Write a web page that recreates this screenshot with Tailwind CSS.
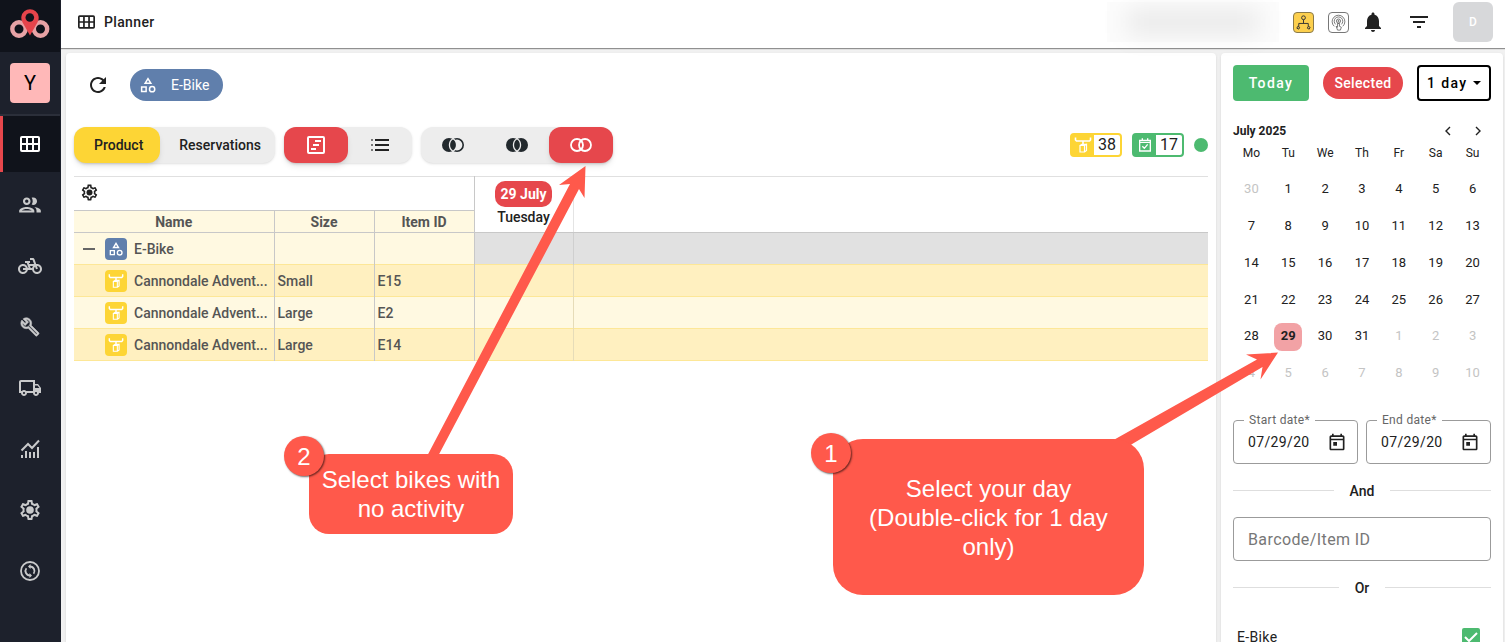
<!DOCTYPE html>
<html lang="en" class="h-full">
	<head>
		<meta charset="UTF-8">
		<meta name="viewport" content="width=device-width, initial-scale=1.0">
		<title>Planner</title>
		<script src="https://cdn.jsdelivr.net/npm/@tailwindcss/browser@4"></script>
	</head>
	<body class="relative h-full flex overflow-hidden bg-[#f1f1f1] font-['Roboto',sans-serif] text-sm text-[#212121]">
		<!-- shared icons -->
		<svg class="hidden" xmlns="http://www.w3.org/2000/svg">
			<symbol id="icon-grid" viewBox="0 0 20 16">
				<path d="M2 1h16a1 1 0 0 1 1 1v12a1 1 0 0 1-1 1H2a1 1 0 0 1-1-1V2a1 1 0 0 1 1-1zM7 1v14M13 1v14M1 8h18" fill="none" stroke="currentColor" stroke-width="2"/>
			</symbol>
			<symbol id="icon-category" viewBox="0 0 24 24">
				<path d="M12 3.5 8.2 9.8h7.6zM3.5 14.5h6v6h-6z" fill="none" stroke="currentColor" stroke-width="2"/>
				<circle cx="17.5" cy="17.5" r="3.5" fill="none" stroke="currentColor" stroke-width="2"/>
			</symbol>
			<symbol id="icon-handlebar" viewBox="0 0 18 18">
				<path d="M1.5 1.5V4l1 1h13l1-1V1.5M9 5v4" fill="none" stroke="currentColor" stroke-width="1.6"/>
				<path d="M6 9.500h4.500v6.500H6zM10.500 9.500l2-1.200v6.200l-2 1.500M6 9.500l2-1.200h4.500" fill="none" stroke="currentColor" stroke-width="1.200"/>
			</symbol>
			<symbol id="icon-settings" viewBox="0 0 24 24">
				<path fill="currentColor" d="M19.430 12.980c.04-.32.07-.64.07-.98 0-.34-.03-.66-.07-.98l2.110-1.650c.19-.15.24-.42.12-.64l-2-3.460c-.09-.16-.26-.25-.44-.25-.06 0-.12.01-.17.03l-2.490 1c-.52-.4-1.080-.73-1.690-.98l-.38-2.650C14.460 2.180 14.250 2 14 2h-4c-.25 0-.46.18-.49.42l-.38 2.650c-.61.25-1.170.59-1.690.98l-2.490-1c-.06-.02-.12-.03-.18-.03-.17 0-.34.09-.43.25l-2 3.460c-.13.22-.07.49.12.64l2.110 1.650c-.04.32-.07.65-.07.98 0 .33.03.66.07.98l-2.110 1.650c-.19.15-.24.42-.12.64l2 3.460c.09.16.26.25.44.25.06 0 .12-.01.17-.03l2.490-1c.52.4 1.080.73 1.690.98l.38 2.650c.03.24.24.42.49.42h4c.25 0 .46-.18.49-.42l.38-2.650c.61-.25 1.170-.59 1.690-.98l2.490 1c.06.02.12.03.18.03.17 0 .34-.09.43-.25l2-3.460c.12-.22.07-.49-.12-.64l-2.110-1.650zm-1.980-1.710c.04.31.05.52.05.73 0 .21-.02.43-.05.73l-.14 1.130.89.7 1.080.84-.7 1.210-1.270-.51-1.040-.42-.9.68c-.43.32-.84.56-1.250.73l-1.060.43-.16 1.130-.2 1.350h-1.400l-.19-1.350-.16-1.130-1.060-.43c-.43-.18-.83-.41-1.230-.71l-.91-.7-1.060.43-1.270.51-.7-1.210 1.080-.84.89-.7-.14-1.130c-.03-.31-.05-.54-.05-.74s.02-.43.05-.73l.14-1.130-.89-.7-1.080-.84.7-1.210 1.270.51 1.040.42.9-.68c.43-.32.84-.56 1.250-.73l1.060-.43.16-1.130.2-1.350h1.390l.19 1.350.16 1.130 1.060.43c.43.18.83.41 1.230.71l.91.7 1.060-.43 1.270-.51.7 1.210-1.070.85-.89.7.14 1.130z"/>
				<circle cx="12" cy="12" r="3.800" fill="currentColor"/>
			</symbol>
			<symbol id="icon-calendar" viewBox="0 0 24 24">
				<path fill="currentColor" d="M19 4h-1V2h-2v2H8V2H6v2H5c-1.100 0-2 .9-2 2v14c0 1.100.9 2 2 2h14c1.100 0 2-.9 2-2V6c0-1.100-.9-2-2-2zm0 16H5V10h14v10zm0-12H5V6h14v2zM7.500 12h4.500v4.500H7.500z"/>
			</symbol>
		</svg>

		<aside class="w-[61px] shrink-0 border-r border-[#1d212c] bg-[#1d212c] text-[#c9cacb]">
			<div class="h-13 flex justify-center items-center bg-[#10131b]">
				<svg class="w-10 h-8 -mt-1" viewBox="0 0 40 32" fill="none">
					<circle cx="9" cy="21" r="6.700" stroke="#e8a3a6" stroke-width="4.400"/>
					<circle cx="30.500" cy="21" r="6.700" stroke="#e8a3a6" stroke-width="4.400"/>
					<path d="M20 27.500 12.600 14.500a8.700 8.700 0 1 1 14.800 0z" fill="#e6444b"/>
					<circle cx="19.800" cy="9.500" r="4.300" fill="#10131b"/>
				</svg>
			</div>
			<div class="h-16 flex justify-center items-center border-b-2 border-[#2b2f3a]">
				<button class="size-10 rounded-sm bg-[#ffb8b8] text-xl text-black">Y</button>
			</div>
			<nav>
				<a href="#" aria-label="Planner" class="h-14 mb-0.5 pr-[3px] flex justify-center items-center border-l-3 border-[#e6474c] bg-[#10131b] text-white"><svg class="w-5 h-4"><use href="#icon-grid"/></svg></a>
				<a href="#" aria-label="Customers" class="h-[61px] flex justify-center items-center"><svg class="size-6.5" viewBox="0 0 24 24" fill="currentColor"><path d="M9 13.750c-2.340 0-7 1.170-7 3.500V19h14v-1.750c0-2.330-4.660-3.500-7-3.500zM4.340 17c.84-.58 2.870-1.250 4.660-1.250s3.820.67 4.660 1.250H4.340zM9 12c1.930 0 3.500-1.570 3.500-3.500S10.930 5 9 5 5.500 6.570 5.500 8.500 7.070 12 9 12zm0-5c.83 0 1.500.67 1.500 1.500S9.830 10 9 10s-1.500-.67-1.500-1.500S8.170 7 9 7zm7.040 6.810c1.160.84 1.960 1.960 1.960 3.440V19h4v-1.750c0-2.020-3.500-3.170-5.960-3.440zM15 12c1.930 0 3.500-1.570 3.500-3.500S16.930 5 15 5c-.54 0-1.040.13-1.500.35.63.89 1 1.980 1 3.150s-.37 2.260-1 3.150c.46.22.96.35 1.500.35z"/></svg></a>
				<a href="#" aria-label="Bikes" class="h-[61px] flex justify-center items-center"><svg class="size-6" viewBox="0 0 24 24" fill="currentColor"><path d="M18.180 10l-1.700-4.680C16.190 4.530 15.440 4 14.600 4H12v2h2.600l1.460 4h-4.810l-.36-1H12V7H7v2h1.750l1.820 5H9.900c-.44-2.230-2.310-3.880-4.650-3.990C2.450 9.870 0 12.200 0 15s2.200 5 5 5c2.460 0 4.450-1.690 4.900-4h4.200c.44 2.230 2.310 3.880 4.650 3.990 2.800.13 5.250-2.190 5.250-5 0-2.800-2.200-5-5-5h-.82zM7.820 16c-.4 1.170-1.490 2-2.820 2-1.680 0-3-1.320-3-3s1.320-3 3-3c1.330 0 2.420.83 2.820 2H5v2h2.820zm6.280-2h-1.400l-.73-2H15c-.44.58-.76 1.250-.9 2zm4.900 4c-1.680 0-3-1.320-3-3 0-.93.41-1.730 1.050-2.280l.96 2.640 1.880-.68-.97-2.670c.03 0 .06-.01.08-.01 1.680 0 3 1.320 3 3s-1.320 3-3 3z"/></svg></a>
				<a href="#" aria-label="Maintenance" class="h-[61px] flex justify-center items-center"><svg class="size-5" viewBox="0 0 24 24" fill="currentColor" stroke="currentColor" stroke-width=".7"><path d="M22.610 18.990l-9.080-9.080c.93-2.340.45-5.100-1.440-7C9.790.61 6.210.4 3.660 2.260L7.500 6.110 6.080 7.520 2.250 3.690C.39 6.230.6 9.820 2.900 12.110c1.860 1.860 4.570 2.350 6.890 1.480l9.110 9.110c.39.39 1.020.39 1.410 0l2.300-2.300c.4-.38.4-1.010 0-1.410zm-3 1.600l-9.460-9.460c-.61.45-1.290.72-2 .82-1.360.2-2.790-.21-3.830-1.250C3.370 9.760 2.930 8.500 3 7.260l3.090 3.090 4.240-4.240-3.090-3.090c1.240-.07 2.490.37 3.440 1.310 1.080 1.080 1.490 2.570 1.240 3.960-.12.71-.42 1.370-.88 1.960l9.450 9.450-.88.89z"/></svg></a>
				<a href="#" aria-label="Deliveries" class="h-[61px] flex justify-center items-center"><svg class="size-6" viewBox="0 0 24 24" fill="currentColor"><path d="M20 8h-3V4H3c-1.100 0-2 .9-2 2v11h2c0 1.660 1.340 3 3 3s3-1.340 3-3h6c0 1.660 1.340 3 3 3s3-1.340 3-3h2v-5l-3-4zm-.5 1.500l1.960 2.500H17V9.500h2.500zM6 18c-.55 0-1-.45-1-1s.45-1 1-1 1 .45 1 1-.45 1-1 1zm2.220-3c-.55-.61-1.330-1-2.220-1s-1.670.39-2.220 1H3V6h12v9H8.220zM18 18c-.55 0-1-.45-1-1s.45-1 1-1 1 .45 1 1-.45 1-1 1z"/></svg></a>
				<a href="#" aria-label="Reports" class="h-[61px] flex justify-center items-center"><svg class="size-5" viewBox="0 0 20 20" fill="none" stroke="currentColor" stroke-width="2"><path d="M1.500 11.500 8 5l4 4 7-7.500M2 19v-3M6 19v-7M10 19v-6M14 19v-6M18 19V8"/></svg></a>
				<a href="#" aria-label="Settings" class="h-[61px] flex justify-center items-center"><svg class="size-6"><use href="#icon-settings"/></svg></a>
				<a href="#" aria-label="Sync" class="h-[61px] flex justify-center items-center"><svg class="size-6" viewBox="0 0 24 24" fill="none" stroke="currentColor" stroke-width="1.800"><circle cx="12" cy="12" r="9"/><path d="M12 7.500a4.500 4.500 0 0 1 3.600 7.200M12 16.500a4.500 4.500 0 0 1-3.600-7.200"/><path d="M12.500 5v5L10 7.500zM11.500 14v5l2.500-2.500z" fill="currentColor" stroke="none"/></svg></a>
			</nav>
		</aside>

		<div class="flex-1 min-w-0 flex flex-col">
			<header class="h-12 shrink-0 z-1 flex items-center bg-white pl-[17px] pr-3 pb-1 shadow-[0_1px_1px_rgba(0,0,0,0.4)]">
				<svg class="w-[17px] h-3.5 mr-[9px]"><use href="#icon-grid"/></svg>
				<h1 class="font-medium tracking-wide">Planner</h1>
				<div class="ml-auto mr-3.5 w-43 h-10 p-2 bg-[#fcfcfc]">
					<div class="h-6 mx-3 bg-black/8 blur-md"></div>
				</div>
				<button aria-label="Locations" class="mr-3.5 size-[21px] rounded-sm border border-[#8a7a4a] bg-[#fccf4d]">
					<svg class="w-full h-full" viewBox="0 0 20 20" fill="none" stroke="#333"><circle cx="10" cy="5" r="2"/><path d="M10 7v4M5 14v-3h10v3M4 14l-1 2 2 1 1-2zM15 14l-1 2 2 1 1-2z"/></svg>
				</button>
				<button aria-label="Tracking" class="mr-3 size-[21px] rounded-sm border border-[#777] bg-white">
					<svg class="w-full h-full" viewBox="0 0 20 20" fill="none" stroke="#555" stroke-width=".8"><path d="M5.500 14a6.700 6.700 0 1 1 9 0M7 12a4.500 4.500 0 1 1 6 0"/><circle cx="10" cy="8.500" r="2.200"/><circle cx="10" cy="8.500" r=".7"/><path d="M9 11v4l-1.500-1 1.500 4h3l1-3-2-1v-3z"/></svg>
				</button>
				<button aria-label="Notifications" class="mr-5.5">
					<svg class="size-6" viewBox="0 0 24 24" fill="currentColor"><path d="M12 22c1.100 0 2-.9 2-2h-4c0 1.100.9 2 2 2zm6-6v-5c0-3.070-1.630-5.640-4.500-6.320V4c0-.83-.67-1.500-1.500-1.500s-1.500.67-1.500 1.500v.68C7.640 5.360 6 7.920 6 11v5l-2 2v1h16v-1z"/></svg>
				</button>
				<button aria-label="Filter" class="mr-5.5">
					<svg class="size-6" viewBox="0 0 24 24" fill="currentColor"><path d="M10 18h4v-2h-4v2zM3 6v2h18V6H3zm3 7h12v-2H6v2z"/></svg>
				</button>
				<button class="size-10 rounded-md bg-[#d7d8da] font-medium text-xs text-white">D</button>
			</header>

			<div class="flex-1 min-h-0 flex gap-[5px] pt-1 pl-[5px] pr-0.5 mt-px">
				<main class="flex-1 min-w-0 px-2 rounded-t-sm bg-white shadow-sm">
					<div class="flex items-center gap-5 pt-4 pl-3">
						<button aria-label="Refresh">
							<svg class="size-6" viewBox="0 0 24 24" fill="currentColor"><path d="M17.650 6.350C16.200 4.900 14.210 4 12 4c-4.420 0-7.990 3.580-7.990 8s3.570 8 7.990 8c3.730 0 6.840-2.550 7.730-6h-2.080c-.82 2.330-3.040 4-5.650 4-3.310 0-6-2.690-6-6s2.690-6 6-6c1.660 0 3.140.69 4.220 1.780L13 11h7V4l-2.350 2.350z"/></svg>
						</button>
						<button class="h-8 flex items-center gap-3.5 pl-[9px] pr-3.5 rounded-full bg-[#607fac] text-white">
							<svg class="size-[18px]"><use href="#icon-category"/></svg>
							<span>E-Bike</span>
						</button>
					</div>
					<div class="flex items-center mt-6.5">
						<div class="h-9 flex mr-[9px] rounded-xl bg-[#ededed] font-medium shadow">
							<button class="pl-5 pr-[17px] rounded-xl bg-[#fdd535] shadow-md">Product</button>
							<button class="pl-[19px] pr-3.5">Reservations</button>
						</div>
						<div class="h-9 flex mr-[9px] rounded-xl bg-[#ededed] shadow">
							<button aria-label="Timeline view" class="w-16 flex justify-center items-center rounded-xl bg-[#e6474c] text-white shadow-md">
								<svg class="size-4.5" viewBox="0 0 18 18" fill="none" stroke="currentColor" stroke-width="2"><rect x="1" y="1" width="16" height="16" rx="1"/><path d="M8 5h6M6 9h6M4 13h5"/></svg>
							</button>
							<button aria-label="List view" class="w-16 flex justify-center items-center">
								<svg class="w-[18px] h-3" viewBox="0 0 18 12" fill="none" stroke="currentColor" stroke-width="2"><path d="M4 1h14M4 6h14M4 11h14"/><path d="M0 1h2M0 6h2M0 11h2" stroke="#777"/></svg>
							</button>
						</div>
						<div class="h-9 flex rounded-xl bg-[#ededed] text-[#22292d] shadow">
							<button aria-label="Partial activity" class="w-16 flex justify-center items-center">
								<svg class="w-[22px] h-3.5" viewBox="0 0 22 14"><circle cx="15" cy="7" r="6.200" fill="none" stroke="currentColor" stroke-width="1.600"/><circle cx="7" cy="7" r="7" fill="currentColor"/><path d="M11 .8a7.200 7.200 0 0 1 0 12.400 7.200 7.200 0 0 1 0-12.400z" fill="currentColor" stroke="#ededed" stroke-width="1.300"/></svg>
							</button>
							<button aria-label="Any activity" class="w-16 flex justify-center items-center">
								<svg class="w-[22px] h-3.5" viewBox="0 0 22 14" fill="currentColor"><circle cx="7" cy="7" r="7"/><circle cx="15" cy="7" r="7"/><path d="M11 .8a7.200 7.200 0 0 1 0 12.400 7.200 7.200 0 0 1 0-12.400z" stroke="#ededed" stroke-width="1.300"/></svg>
							</button>
							<button aria-label="No activity" class="w-16 flex justify-center items-center rounded-xl bg-[#e6474c] text-white shadow-md">
								<svg class="w-[22px] h-3.5" viewBox="0 0 22 14" fill="none" stroke="currentColor" stroke-width="1.800"><circle cx="7" cy="7" r="6"/><circle cx="15" cy="7" r="6"/></svg>
							</button>
						</div>
						<div class="ml-auto flex items-center gap-2.5">
							<div class="h-6 flex items-center rounded-sm border-2 border-[#fdd535] bg-[#fdd535]">
								<svg class="w-[22px] h-4.5 px-0.5 text-white"><use href="#icon-handlebar"/></svg>
								<span class="w-[26px] text-center bg-white text-base leading-5 rounded-r-xs">38</span>
							</div>
							<div class="h-6 flex items-center rounded-sm border-2 border-[#4dba70] bg-[#4dba70]">
								<svg class="w-[22px] h-4" viewBox="0 0 24 24" fill="none" stroke="#fff" stroke-width="2"><path d="M4 5h16v16H4zM4 8h16M8 2v3M16 2v3M8 14l3 3 5-6"/></svg>
								<span class="w-[26px] text-center bg-white text-base leading-5 rounded-r-xs">17</span>
							</div>
							<span class="size-3.5 rounded-full bg-[#4dba70]"></span>
						</div>
					</div>

					<table class="w-full mt-[13px] table-fixed border-collapse border-t border-[#e0e0e0] text-left font-medium text-[#555]">
						<colgroup>
							<col class="w-50"><col class="w-25"><col class="w-25"><col class="w-[99px]"><col>
						</colgroup>
						<thead>
							<tr class="h-[34px]">
								<td colspan="3" class="px-1.5 border-r border-b border-[#c8c8c8]">
									<button aria-label="Table settings" class="block -mt-0.5 text-[#212121]"><svg class="size-[19px]"><use href="#icon-settings"/></svg></button>
								</td>
								<th rowspan="2" class="border-r border-r-[#e4e4e4] border-b border-b-[#c8c8c8] align-top text-center text-[#212121]">
									<span class="block w-fit mx-auto mt-1 px-1.5 rounded-[10px] bg-[#e6474c] font-bold leading-[26px] text-white">29 July</span>
									<span class="block font-medium">Tuesday</span>
								</th>
								<td rowspan="2" class="border-b border-[#c8c8c8]"></td>
							</tr>
							<tr class="h-[22px] bg-[#fff9e1] text-center">
								<th class="border-r border-b border-[#c8c8c8] font-bold">Name</th>
								<th class="border-r border-b border-[#c8c8c8] font-bold">Size</th>
								<th class="border-r border-b border-[#c8c8c8] font-bold">Item ID</th>
							</tr>
						</thead>
						<tbody>
							<tr class="h-8 bg-[#fff9e1]">
								<td class="border-r border-[#c8c8c8]">
									<div class="flex items-center pl-[9px]">
										<button aria-label="Collapse" class="w-3 h-0.5 mr-2.5 bg-[#666]"></button>
										<span class="size-[22px] mr-[7px] flex justify-center items-center rounded-sm bg-[#607fac] text-white"><svg class="size-4"><use href="#icon-category"/></svg></span>
										<span>E-Bike</span>
									</div>
								</td>
								<td class="border-r border-[#c8c8c8]"></td>
								<td class="border-r border-[#c8c8c8]"></td>
								<td class="border-r border-[#cfcfcf] bg-[#e1e1e1]"></td>
								<td class="bg-[#e1e1e1]"></td>
							</tr>
							<tr class="h-8 border-y border-[#fde797] bg-[#fff0c0]">
								<td class="border-r border-r-[#c8c8c8]">
									<div class="flex items-center pl-[31px]">
										<span class="size-[22px] mr-[7px] shrink-0 flex justify-center items-center rounded-sm bg-[#fdd535] text-white"><svg class="size-4"><use href="#icon-handlebar"/></svg></span>
										<span class="whitespace-nowrap">Cannondale Advent...</span>
									</div>
								</td>
								<td class="px-[3px] border-r border-r-[#c8c8c8]">Small</td>
								<td class="px-[3px] border-r border-r-[#c8c8c8]">E15</td>
								<td class="border-r border-r-[#e6dcb8]"></td>
								<td></td>
							</tr>
							<tr class="h-8 border-y border-[#fde797] bg-[#fff9e1]">
								<td class="border-r border-r-[#c8c8c8]">
									<div class="flex items-center pl-[31px]">
										<span class="size-[22px] mr-[7px] shrink-0 flex justify-center items-center rounded-sm bg-[#fdd535] text-white"><svg class="size-4"><use href="#icon-handlebar"/></svg></span>
										<span class="whitespace-nowrap">Cannondale Advent...</span>
									</div>
								</td>
								<td class="px-[3px] border-r border-r-[#c8c8c8]">Large</td>
								<td class="px-[3px] border-r border-r-[#c8c8c8]">E2</td>
								<td class="border-r border-r-[#e6dcb8]"></td>
								<td></td>
							</tr>
							<tr class="h-8 border-y border-[#fde797] bg-[#fff0c0]">
								<td class="border-r border-r-[#c8c8c8]">
									<div class="flex items-center pl-[31px]">
										<span class="size-[22px] mr-[7px] shrink-0 flex justify-center items-center rounded-sm bg-[#fdd535] text-white"><svg class="size-4"><use href="#icon-handlebar"/></svg></span>
										<span class="whitespace-nowrap">Cannondale Advent...</span>
									</div>
								</td>
								<td class="px-[3px] border-r border-r-[#c8c8c8]">Large</td>
								<td class="px-[3px] border-r border-r-[#c8c8c8]">E14</td>
								<td class="border-r border-r-[#e6dcb8]"></td>
								<td></td>
							</tr>
						</tbody>
					</table>
				</main>

				<aside class="w-[282px] shrink-0 px-3 pt-3 overflow-hidden rounded-t-sm bg-white shadow-sm">
					<div class="flex justify-between items-center font-medium">
						<button class="w-19 h-9 rounded-sm bg-[#4dba70] text-white tracking-widest">Today</button>
						<button class="w-20 h-8 rounded-full bg-[#e6474c] text-white tracking-wide">Selected</button>
						<div class="relative">
							<select aria-label="Range" class="w-[74px] h-9 pl-2 appearance-none rounded-sm border-2 border-black bg-white text-black tracking-widest">
								<option>1 day</option>
							</select>
							<svg class="absolute right-2.5 top-4 w-2 h-1 pointer-events-none" viewBox="0 0 8 4"><path d="M0 0h8L4 4z"/></svg>
						</div>
					</div>

					<div class="flex items-center mt-5 h-5">
						<h2 class="mr-auto text-xs font-bold">July 2025</h2>
						<button aria-label="Previous month" class="w-[30px] flex justify-center"><svg class="w-1.5 h-2.5" viewBox="0 0 6 10" fill="none" stroke="currentColor" stroke-width="1.400"><path d="M5 1 1 5l4 4"/></svg></button>
						<button aria-label="Next month" class="w-[30px] flex justify-center -mr-0.5"><svg class="w-1.5 h-2.5" viewBox="0 0 6 10" fill="none" stroke="currentColor" stroke-width="1.400"><path d="m1 1 4 4-4 4"/></svg></button>
					</div>
					<table class="w-full table-fixed text-center text-[13px]">
						<thead>
							<tr class="h-[30px] align-top text-xs leading-6"><th class="font-normal">Mo</th><th class="font-normal">Tu</th><th class="font-normal">We</th><th class="font-normal">Th</th><th class="font-normal">Fr</th><th class="font-normal">Sa</th><th class="font-normal">Su</th></tr>
						</thead>
						<tbody>
							<tr class="h-[37px]"><td class="text-[#c4c4c4]">30</td><td>1</td><td>2</td><td>3</td><td>4</td><td>5</td><td>6</td></tr>
							<tr class="h-[37px]"><td>7</td><td>8</td><td>9</td><td>10</td><td>11</td><td>12</td><td>13</td></tr>
							<tr class="h-[37px]"><td>14</td><td>15</td><td>16</td><td>17</td><td>18</td><td>19</td><td>20</td></tr>
							<tr class="h-9"><td>21</td><td>22</td><td>23</td><td>24</td><td>25</td><td>26</td><td>27</td></tr>
							<tr class="h-[37px]"><td>28</td><td><button class="size-7 rounded-lg bg-[#f2a2a5] font-bold">29</button></td><td>30</td><td>31</td><td class="text-[#c4c4c4]">1</td><td class="text-[#c4c4c4]">2</td><td class="text-[#c4c4c4]">3</td></tr>
							<tr class="h-[37px] text-[#c4c4c4]"><td>4</td><td>5</td><td>6</td><td>7</td><td>8</td><td>9</td><td>10</td></tr>
						</tbody>
					</table>

					<div class="grid grid-cols-2 gap-2 mt-5">
						<fieldset class="min-w-0 h-[52px] px-3.5 rounded-sm border border-[#9b9b9b]">
							<legend class="-ml-1 px-[5px] text-xs leading-4 text-[#666] tracking-wide"><label for="start-date">Start date*</label></legend>
							<div class="flex justify-between items-center pt-1">
								<input id="start-date" type="text" value="07/29/2025" class="w-[62px] tracking-wide outline-none">
								<svg class="size-5 shrink-0 -mr-1"><use href="#icon-calendar"/></svg>
							</div>
						</fieldset>
						<fieldset class="min-w-0 h-[52px] px-3.5 rounded-sm border border-[#9b9b9b]">
							<legend class="-ml-1 px-[5px] text-xs leading-4 text-[#666] tracking-wide"><label for="end-date">End date*</label></legend>
							<div class="flex justify-between items-center pt-1">
								<input id="end-date" type="text" value="07/29/2025" class="w-[62px] tracking-wide outline-none">
								<svg class="size-5 shrink-0 -mr-1"><use href="#icon-calendar"/></svg>
							</div>
						</fieldset>
					</div>
					<div class="flex items-center h-[53px] font-medium">
						<hr class="flex-1 border-[#dedede]"><span class="px-4">And</span><hr class="flex-1 border-[#dedede]">
					</div>
					<input type="text" aria-label="Barcode/Item ID" placeholder="Barcode/Item ID" class="block w-full h-11 px-3.5 rounded-sm border border-[#9b9b9b] text-base tracking-wide placeholder:text-[#777]">
					<div class="flex items-center h-[53px] font-medium">
						<hr class="flex-1 border-[#dedede]"><span class="px-4">Or</span><hr class="flex-1 border-[#dedede]">
					</div>
					<div class="relative flex justify-between items-center h-[46px] pl-1 pr-[11px]">
						<label for="filter-ebike" class="tracking-wide">E-Bike</label>
						<input id="filter-ebike" type="checkbox" checked class="size-[18px] appearance-none rounded-xs bg-[#4dba70]">
						<svg class="absolute right-[13px] top-4 size-3.5 pointer-events-none" viewBox="0 0 14 14" fill="none" stroke="#fff" stroke-width="2"><path d="m1 7 4 4 8-8"/></svg>
					</div>
				</aside>
			</div>
		</div>

		<!-- callouts lie over the planner -->
		<svg class="absolute left-0 top-0 z-10 w-[1505px] h-[642px] pointer-events-none" viewBox="0 0 1505 642" fill="#ff594b">
			<path d="M585.500 166 559 185l11-1L425 460h11L579 189l5.500 9z"/>
			<path d="M1278 352.500 1246 354.500l11 5L1110 442l12 8 140.500-83L1260.500 379.500z"/>
		</svg>
		<div class="absolute z-10 left-[309px] top-[454px] w-[204px] h-20 flex justify-center items-center rounded-[20px] bg-[#ff594b] font-['Liberation_Sans',sans-serif] text-2xl leading-[29px] text-center text-white">
			<p>Select bikes with<br>no activity</p>
			<span class="absolute -left-[25px] -top-[18px] size-10 flex justify-center items-center rounded-full bg-[#ff594b] shadow-[1px_1px_2px_rgba(0,0,0,0.6)]">2</span>
		</div>
		<div class="absolute z-10 left-[833px] top-[439px] w-[311px] h-[156px] flex justify-center items-center rounded-[30px] bg-[#ff594b] font-['Liberation_Sans',sans-serif] text-2xl leading-[29px] text-center text-white">
			<p>Select your day<br>(Double-click for 1 day<br>only)</p>
			<span class="absolute -left-[22px] -top-[6px] size-10 flex justify-center items-center rounded-full bg-[#ff594b] shadow-[1px_1px_2px_rgba(0,0,0,0.6)]">1</span>
		</div>
	</body>
</html>
